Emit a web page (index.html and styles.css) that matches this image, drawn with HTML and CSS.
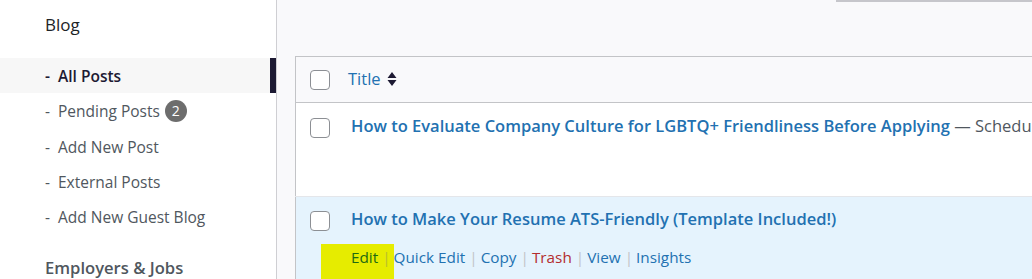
FILE: index.html
```html
<!DOCTYPE html>
<html>
<head>
    <title>Posts</title>
    <link rel="stylesheet" href="styles.css">
</head>
<body>
<div class="wrap">
    <div class="sidebar">
        <div class="side-title">Blog</div>
        <ul class="side-menu">
            <li class="active"><span class="dash">-</span>All Posts</li>
            <li><span class="dash">-</span>Pending Posts <span class="badge">2</span></li>
            <li><span class="dash">-</span>Add New Post</li>
            <li><span class="dash">-</span>External Posts</li>
            <li><span class="dash">-</span>Add New Guest Blog</li>
        </ul>
        <div class="side-title side-next">Employers &amp; Jobs</div>
    </div>

    <div class="main">
        <div class="toolbar">
            <div class="search-edge"></div>
        </div>

        <table class="posts">
            <tr class="head">
                <td class="cb"><span class="box"></span></td>
                <td class="col-title">
                    <a class="sort">Title
                        <svg width="10" height="16" viewBox="0 0 10 16"><path d="M5 1 L9.5 7 L0.5 7 Z M0.5 9 L9.5 9 L5 15 Z" fill="#1d1a33"/></svg>
                    </a>
                </td>
            </tr>
            <tr class="row">
                <td class="cb"><span class="box"></span></td>
                <td class="col-title">
                    <a class="post-link">How to Evaluate Company Culture for LGBTQ+ Friendliness Before Applying</a><span class="state"> — Scheduled</span>
                    <div class="actions hidden">&nbsp;</div>
                </td>
            </tr>
            <tr class="row hover">
                <td class="cb"><span class="box"></span></td>
                <td class="col-title">
                    <a class="post-link">How to Make Your Resume ATS-Friendly (Template Included!)</a>
                    <div class="actions">
                        <span class="mark"><a class="edit">Edit</a><span class="sep">|</span></span><a>Quick Edit</a><span class="sep">|</span><a>Copy</a><span class="sep">|</span><a class="trash">Trash</a><span class="sep">|</span><a>View</a><span class="sep">|</span><a>Insights</a>
                    </div>
                </td>
            </tr>
        </table>
    </div>
</div>
</body>
</html>
```

FILE: styles.css
```css
html, body {
    margin: 0;
    padding: 0;
    height: 279px;
    overflow: hidden;
}
body {
    font-family: "Open Sans", "Noto Sans", sans-serif;
    background-color: #f9f9fb;
    color: #1d2327;
}
.wrap {
    display: flex;
    height: 279px;
}
.sidebar {
    width: 276px;
    flex: none;
    background-color: #fff;
    border-right: 1px solid #cfcfd3;
}
.side-title {
    padding: 12px 0 0 45px;
    line-height: 26px;
    font-size: 17px;
    color: #1d2327;
    margin-bottom: 20px;
}
.side-next {
    padding-top: 0;
    margin-top: 21px;
    font-size: 16.6px;
    font-weight: 600;
    color: #50575e;
}
.side-menu {
    list-style: none;
    margin: 0;
    padding: 0;
}
.side-menu li {
    height: 35.3px;
    line-height: 37px;
    padding-left: 45px;
    font-size: 15.5px;
    color: #50575e;
}
.side-menu li.active {
    background-color: #f7f7f7;
    color: #1d1a33;
    font-weight: 600;
    box-shadow: inset -6px 0 0 #1d1a33;
}
.dash {
    display: inline-block;
    width: 13px;
}
.badge {
    display: inline-block;
    width: 22px;
    height: 22px;
    line-height: 22px;
    border-radius: 50%;
    background-color: #6d6d6d;
    color: #fff;
    font-size: 14px;
    text-align: center;
    margin-left: 1px;
    vertical-align: 1px;
}
.main {
    flex: 1;
    padding-left: 18px;
    overflow: hidden;
}
.toolbar {
    height: 56px;
    display: flex;
    justify-content: flex-end;
}
.search-edge {
    width: 196px;
    height: 2px;
    background-color: #c6c6cb;
}
table.posts {
    width: 900px;
    border-collapse: collapse;
    border: 1px solid #c3c4c7;
    background-color: #fff;
}
.posts td {
    padding: 0;
    vertical-align: top;
}
.posts .cb {
    width: 38px;
    padding-left: 14px;
}
.box {
    display: block;
    width: 18px;
    height: 18px;
    border: 1px solid #8c8f94;
    border-radius: 4px;
    background-color: #fff;
}
.head td {
    background-color: #f9f9fb;
    border-bottom: 1px solid #c3c4c7;
    height: 45px;
}
.head .cb .box {
    margin-top: 13px;
}
.sort {
    display: inline-flex;
    align-items: center;
    gap: 6px;
    color: #2271b1;
    font-size: 16.5px;
    line-height: 20px;
    margin-top: 12px;
}
.row .cb .box {
    margin-top: 15px;
}
.row .col-title {
    padding: 11px 0 10px 3px;
    font-size: 16.5px;
    line-height: 24px;
}
.row.hover td {
    background-color: #e5f3fd;
    border-top: 1px solid #e4e6ea;
    padding-top: 10px;
    padding-bottom: 0;
}
.row.hover .cb .box {
    margin-top: 4px;
}
.post-link {
    color: #2271b1;
    font-weight: 600;
}
.state {
    color: #50575e;
}
.actions {
    margin-top: 15px;
    font-size: 15.3px;
    line-height: 22px;
    color: #2271b1;
}
.actions.hidden {
    margin-top: 26px;
}
.actions a {
    color: #2271b1;
}
.actions .sep {
    color: #c3c4c7;
    margin: 0 3px 0 4px;
}
.actions a.trash {
    color: #b32d2e;
}
.mark {
    display: inline-block;
    background-color: #e6ec00;
    margin-left: -30px;
    padding: 2px 0 12px 30px;
    margin-top: -2px;
}
.mark .sep {
    color: #b8bd30;
    margin-right: 0;
    padding-right: 3px;
}
.actions a.edit {
    color: #1f6a12;
}
```
